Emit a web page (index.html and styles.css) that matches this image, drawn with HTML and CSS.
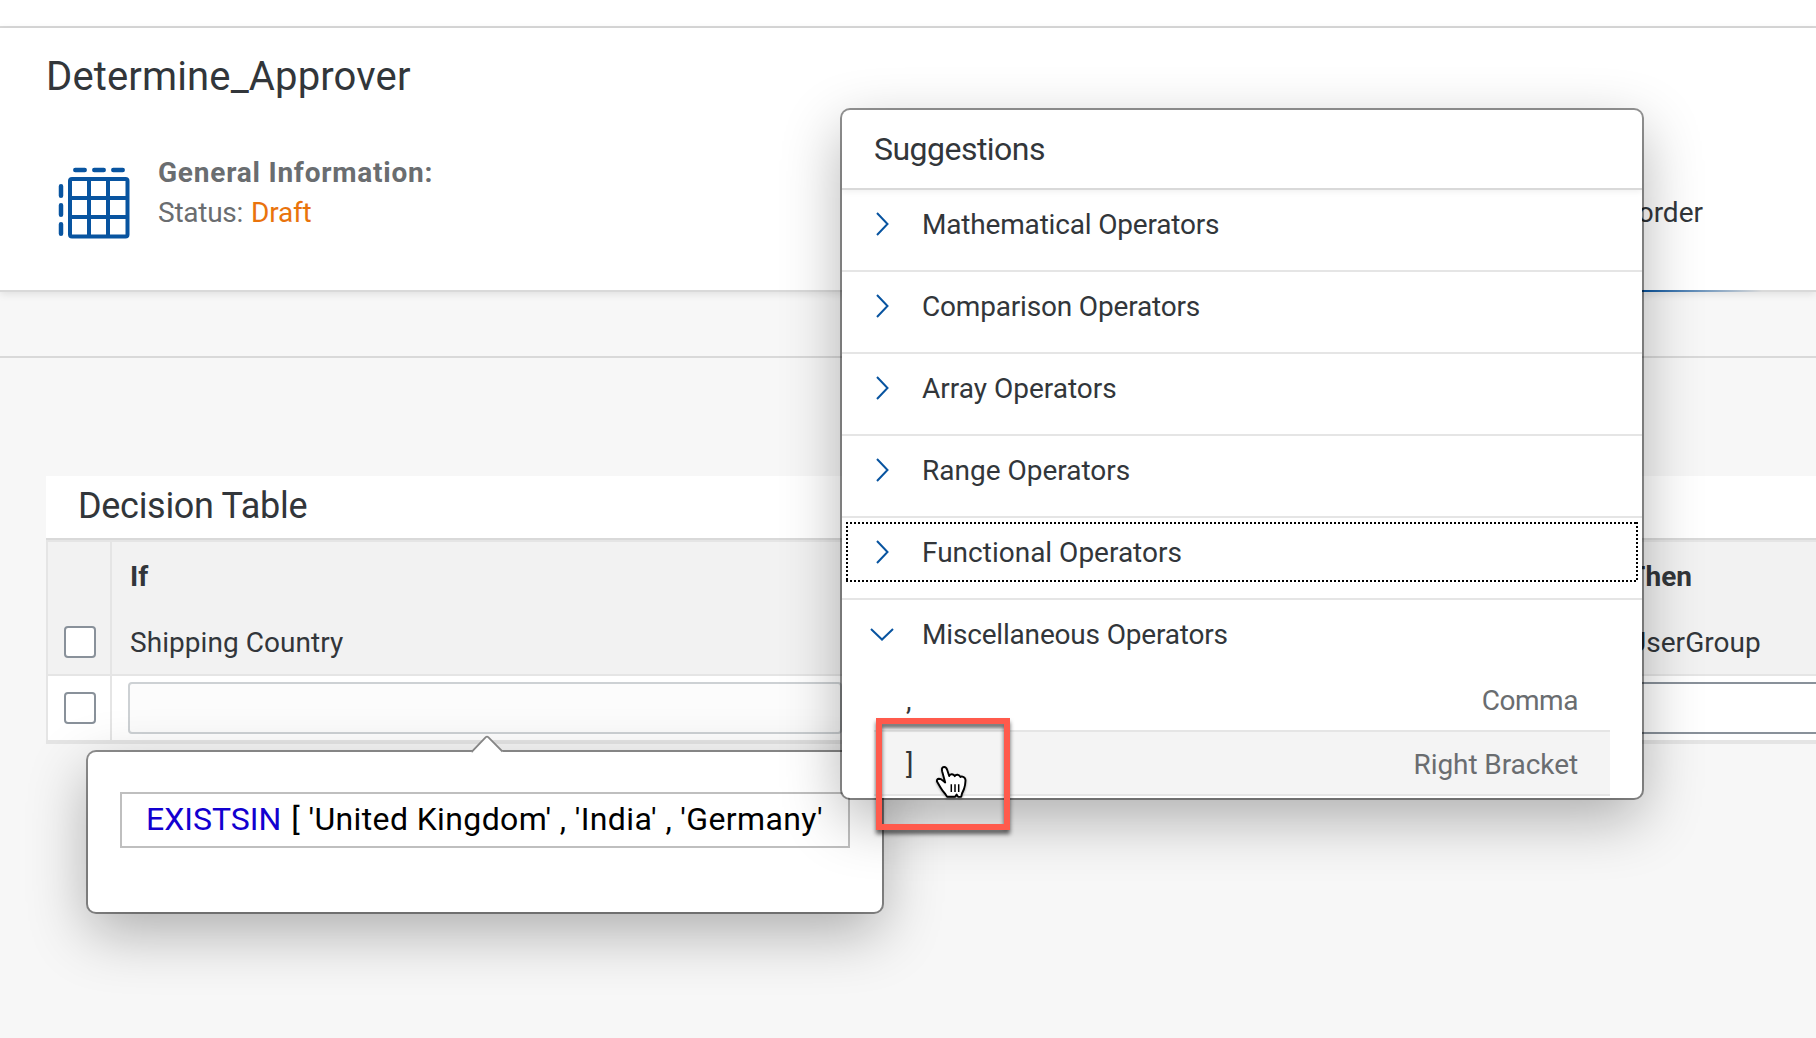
FILE: index.html
```html
<!DOCTYPE html>
<html lang="en">
<head>
<meta charset="utf-8">
<title>Determine_Approver</title>
<link rel="stylesheet" href="styles.css">
</head>
<body>
<div class="topbar"></div>
<header class="object-header">
  <h1 class="title">Determine_Approver</h1>
  <div class="header-row">
    <svg class="table-icon" viewBox="0 0 72 72" width="72" height="72" aria-hidden="true">
      <g fill="none" stroke="#0854a0" stroke-width="4">
        <rect x="12" y="12" width="57.5" height="57.5" rx="2"/>
        <path d="M31 12v57M50 12v57M12 31h57M12 50h57"/>
      </g>
      <g fill="none" stroke="#0854a0" stroke-width="4.5" stroke-linecap="round">
        <path d="M17.3 3h9.4M36.3 3h9.4M55.3 3h9.4M3 19.3v9.4M3 38.3v9.4M3 57.3v9.4"/>
      </g>
    </svg>
    <div class="general">
      <div class="general-title">General Information:</div>
      <div class="status"><span>Status:</span><span class="draft">Draft</span></div>
    </div>
    <div class="tab">order</div>
  </div>
</header>
<div class="subbar"></div>
<main class="panel">
  <h2 class="panel-title">Decision Table</h2>
  <div class="grid">
    <div class="cell head select"><i class="checkbox"></i></div>
    <div class="cell head"><b>If</b><span>Shipping Country</span></div>
    <div class="cell head last"><b>Then</b><span>UserGroup</span></div>
    <div class="cell select"><i class="checkbox"></i></div>
    <div class="cell"><div class="field disabled"></div></div>
    <div class="cell last"><div class="field open-ended"></div></div>
  </div>
</main>

<section class="popover editor">
  <svg class="arrow" viewBox="0 0 32 18" width="32" height="18" aria-hidden="true">
    <path d="M0 17 16 1l16 16v1H0z" fill="#fff"/>
    <path d="M.5 17 14.800 2.200q1.200-1.200 2.400 0L31.500 16.500" fill="none" stroke="#858585" stroke-width="1.800"/>
  </svg>
  <div class="expression"><span class="keyword">EXISTSIN</span><span class="values">[ 'United Kingdom' , 'India' , 'Germany'</span></div>
</section>

<section class="popover suggestions">
  <h3 class="suggestions-title">Suggestions</h3>
  <div class="group tight"><svg class="chevron" viewBox="0 0 24 24"><path d="M7 1 17.500 12 7 23"/></svg><span>Mathematical Operators</span></div>
  <div class="group tight"><svg class="chevron" viewBox="0 0 24 24"><path d="M7 1 17.500 12 7 23"/></svg><span>Comparison Operators</span></div>
  <div class="group"><svg class="chevron" viewBox="0 0 24 24"><path d="M7 1 17.500 12 7 23"/></svg><span>Array Operators</span></div>
  <div class="group"><svg class="chevron" viewBox="0 0 24 24"><path d="M7 1 17.500 12 7 23"/></svg><span>Range Operators</span></div>
  <div class="group focused"><svg class="chevron" viewBox="0 0 24 24"><path d="M7 1 17.500 12 7 23"/></svg><span>Functional Operators</span>
    <svg class="focus" viewBox="0 0 792 60" width="792" height="60" aria-hidden="true"><path d="M0 1h792M0 59h792M1 0v60M791 0v60"/></svg>
  </div>
  <div class="group tight open"><svg class="chevron" viewBox="0 0 24 24"><path d="M1 7 12 17.500 23 7"/></svg><span>Miscellaneous Operators</span></div>
  <div class="item"><span>,</span><span class="comma">Comma</span></div>
  <div class="item hovered"><span>]</span><span class="bracket">Right Bracket</span></div>
</section>

<div class="highlight"></div>
<svg class="pointer" viewBox="0 0 34 36" width="34" height="36" aria-hidden="true">
  <path d="M10.200 17.500 7.200 6.500Q6.200 2.200 9 2q2.200-.2 3.200 3l2 6q.6-2 2.800-1.800 2 .2 2.800 2 .8-1.700 2.800-1.500 2 .3 2.800 2.300 1-.8 2.800-.2 2.300.8 2.300 3.700-.2 5-1.500 8.500l-2 4.500-.8 3.200q-2.200.6-3.600-.5l-1-1.700-1.500 2.200h-8l-1.800-2.700Q7.500 26 5.500 22.500L2 16.500Q1.500 14 4 13.800q2 0 3.500 1.500z" fill="#fff" stroke="#000" stroke-width="1.900" stroke-linejoin="round"/>
  <path d="M16.300 19.300v7.600M20 19.300v7.600M23.700 19.300v7.600" stroke="#000" stroke-width="1.500"/>
</svg>
</body>
</html>
```
FILE: styles.css
```css
* { box-sizing: border-box; }
body {
  margin: 0;
  width: 1816px;
  height: 1038px;
  overflow: hidden;
  position: relative;
  background: #f7f7f7;
  color: #32363a;
  font: 28px/40px Roboto, "Noto Sans", sans-serif;
}
h1, h2, h3 { margin: 0; font-weight: 400; }
.topbar { height: 28px; background: #fff; border-bottom: 2px solid #d9d9d9; }
.object-header {
  height: 264px;
  padding: 25px 0 0 46px;
  background: #fff;
  border-bottom: 2px solid #d9d9d9;
  box-shadow: 0 2px 8px rgba(0, 0, 0, .1);
}
.title { font-size: 40px; line-height: 48px; letter-spacing: .14px; }
.header-row { display: flex; height: 189px; padding-top: 51px; }
.table-icon { margin: 15px 0 0 12px; }
.general { margin-left: 28px; padding-top: 1px; color: #6a6d70; }
.general-title { font-weight: 700; letter-spacing: .78px; }
.status { display: flex; gap: 8px; letter-spacing: -.25px; }
.draft { color: #e9730c; }
.tab {
  display: flex;
  justify-content: flex-end;
  width: 130px;
  height: 140px;
  margin-left: auto;
  margin-right: 54px;
  padding: 41px 59px 0 0;
  background: linear-gradient(90deg, #0854a0 10px, #d9d9d9) bottom / 100% 2px no-repeat;
}
.subbar { height: 66px; border-bottom: 2px solid #d9d9d9; }
.panel { margin: 118px 0 0 46px; background: #fff; }
.panel-title {
  height: 64px;
  padding: 6px 0 0 32px;
  font-size: 36px;
  line-height: 48px;
  letter-spacing: -.3px;
  border-bottom: 2px solid #d9d9d9;
}
.grid {
  display: grid;
  grid-template-columns: 64px 1498px 1fr;
  grid-template-rows: 134px 64px;
  border: solid #e5e5e5;
  border-width: 2px 0 4px 2px;
}
.cell { border-right: 2px solid #e5e5e5; padding: 6px 16px; }
.cell.last { border-right: 0; padding-right: 0; }
.head {
  display: flex;
  flex-direction: column;
  gap: 26px;
  padding: 15px 18px 0;
  background: #f2f2f2;
  border-bottom: 2px solid #e5e5e5;
  letter-spacing: .05px;
}
.select { padding: 16px 0 0 16px; }
.head.select { padding-top: 84px; }
.checkbox { display: block; width: 32px; height: 32px; border: 2px solid #89919a; border-radius: 4px; background: #fff; }
.field { height: 52px; border: 2px solid #89919a; border-radius: 4px; background: #fff; }
.field.disabled { width: 714px; border-color: #cdd1d4; background: #fcfcfc; }
.field.open-ended { border-right: 0; border-radius: 4px 0 0 4px; }
.popover {
  position: absolute;
  background: #fff;
  border-radius: 8px;
  box-shadow: 0 0 0 2px rgba(0, 0, 0, .42), 0 20px 60px rgba(0, 0, 0, .3);
}
.editor { left: 88px; top: 752px; width: 794px; height: 160px; padding: 40px 32px 0; }
.arrow { position: absolute; left: 383px; top: -17px; }
.expression {
  display: flex;
  gap: 10px;
  width: 730px;
  height: 56px;
  padding: 4px 0 0 24px;
  border: 2px solid #bfbfbf;
  color: #000;
  font-size: 32px;
  line-height: 42px;
  white-space: nowrap;
}
.keyword { color: #1200d0; }
.values { letter-spacing: .37px; }
.suggestions { left: 842px; top: 110px; width: 800px; height: 688px; overflow: hidden; }
.suggestions-title {
  height: 80px;
  padding: 17px 0 0 32px;
  font-size: 32px;
  line-height: 44px;
  letter-spacing: -.53px;
  border-bottom: 2px solid #d9d9d9;
  box-shadow: 0 2px 6px rgba(0, 0, 0, .06);
}
.group {
  position: relative;
  display: flex;
  gap: 28px;
  height: 82px;
  padding: 15px 0 0 28px;
  border-bottom: 2px solid #e5e5e5;
}
.group.tight { letter-spacing: -.18px; }
.group.open { height: 66px; border: 0; }
.chevron { width: 24px; height: 24px; margin-top: 7px; fill: none; stroke: #0854a0; stroke-width: 2; }
.focus { position: absolute; left: 4px; top: 4px; }
.focus path { fill: none; stroke: #000; stroke-width: 2; stroke-dasharray: 2 2; }
.item {
  display: flex;
  justify-content: space-between;
  height: 66px;
  margin: 0 32px;
  padding: 15px 32px 0 32px;
  border-bottom: 2px solid #e5e5e5;
}
.item span:last-child { color: #6a6d70; }
.comma { letter-spacing: -.45px; }
.bracket { letter-spacing: -.08px; }
.item.hovered { background: #f4f4f4; height: 64px; padding-top: 13px; }
.highlight {
  position: absolute;
  left: 876px;
  top: 718px;
  width: 134px;
  height: 112px;
  border: 6px solid #ff5a4c;
  filter: drop-shadow(0 4px 2px rgba(0, 0, 0, .6));
}
.pointer { position: absolute; left: 935px; top: 765px; filter: drop-shadow(0 1px 1px rgba(0, 0, 0, .35)); }
```
